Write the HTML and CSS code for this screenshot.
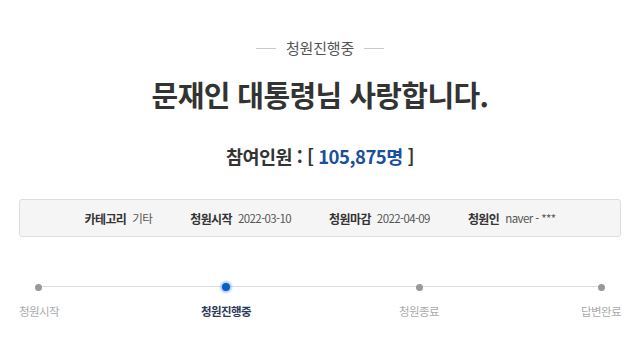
FILE: index.html
```html
<!DOCTYPE html>
<html lang="ko">

<head>
    <meta charset="UTF-8" />
    <meta name="viewport" content="width=device-width, initial-scale=1.0" />
    <title>청원진행중</title>
    <link rel="stylesheet" href="styles.css">
</head>

<body>
    <div class="petition">
        <p class="status">청원진행중</p>
        <h1 class="title">문재인 대통령님 사랑합니다.</h1>
        <p class="count">참여인원 : [ <span class="count-num">105,875명</span> ]</p>

        <ul class="info">
            <li><b>카테고리</b><span>기타</span></li>
            <li><b>청원시작</b><span>2022-03-10</span></li>
            <li><b>청원마감</b><span>2022-04-09</span></li>
            <li><b>청원인</b><span>naver - ***</span></li>
        </ul>

        <ol class="steps">
            <li class="step"><i class="dot"></i><span>청원시작</span></li>
            <li class="step active"><i class="dot"></i><span>청원진행중</span></li>
            <li class="step"><i class="dot"></i><span>청원종료</span></li>
            <li class="step"><i class="dot"></i><span>답변완료</span></li>
        </ol>
    </div>
</body>

</html>
```

FILE: styles.css
```css
* {
    box-sizing: border-box;
}

body {
    margin: 0;
    background-color: #fff;
    font-family: "Noto Sans CJK KR", "Noto Sans", sans-serif;
    color: #333;
}

.petition {
    width: 602px;
    margin: 0 auto;
    padding-top: 38px;
}

.status {
    display: flex;
    justify-content: center;
    align-items: center;
    gap: 10px;
    margin: 0;
    font-size: 15px;
    line-height: 20px;
    color: #555;
    letter-spacing: -0.2px;
}

.status::before,
.status::after {
    content: "";
    width: 20px;
    height: 1px;
    background-color: #c8c8c8;
}

.title {
    margin: 18px 0 0;
    text-align: center;
    font-size: 29px;
    line-height: 36px;
    font-weight: 700;
    letter-spacing: -0.6px;
    color: #333;
}

.count {
    margin: 31px 0 0;
    text-align: center;
    font-size: 18.5px;
    line-height: 26px;
    font-weight: 700;
    letter-spacing: -0.5px;
}

.count-num {
    color: #1b4f9c;
}

.info {
    display: flex;
    justify-content: center;
    align-items: center;
    gap: 38px;
    height: 38px;
    margin: 30px 0 0;
    padding: 0;
    list-style: none;
    background-color: #f5f5f5;
    border: 1px solid #ddd;
    border-radius: 3px;
    font-size: 11.5px;
    letter-spacing: -0.6px;
}

.info li {
    display: flex;
    gap: 6px;
}

.info b {
    font-size: 12px;
    font-weight: 700;
    color: #333;
}

.info span {
    color: #555;
}

.steps {
    position: relative;
    display: flex;
    justify-content: space-between;
    margin: 43px 0 0;
    padding: 0;
    list-style: none;
}

/* connecting line between first and last dot */
.steps::before {
    content: "";
    position: absolute;
    top: 6px;
    left: 20px;
    right: 20px;
    height: 1px;
    background-color: #ddd;
}

.step {
    position: relative;
    display: flex;
    flex-direction: column;
    align-items: center;
    gap: 8px;
    font-size: 11.5px;
    line-height: 18px;
    color: #aaa;
    letter-spacing: -0.6px;
}

.dot {
    display: flex;
    justify-content: center;
    align-items: center;
    width: 14px;
    height: 14px;
}

.dot::after {
    content: "";
    width: 7px;
    height: 7px;
    border-radius: 50%;
    background-color: #999;
}

.step.active {
    color: #2b3a58;
    font-weight: 700;
    margin-right: 6px;
}

.step.active .dot {
    border-radius: 50%;
    background: radial-gradient(circle, rgba(60, 140, 230, 0.4) 45%, rgba(60, 140, 230, 0) 75%);
}

.step.active .dot::after {
    width: 8px;
    height: 8px;
    background-color: #0b5dc4;
}
```
